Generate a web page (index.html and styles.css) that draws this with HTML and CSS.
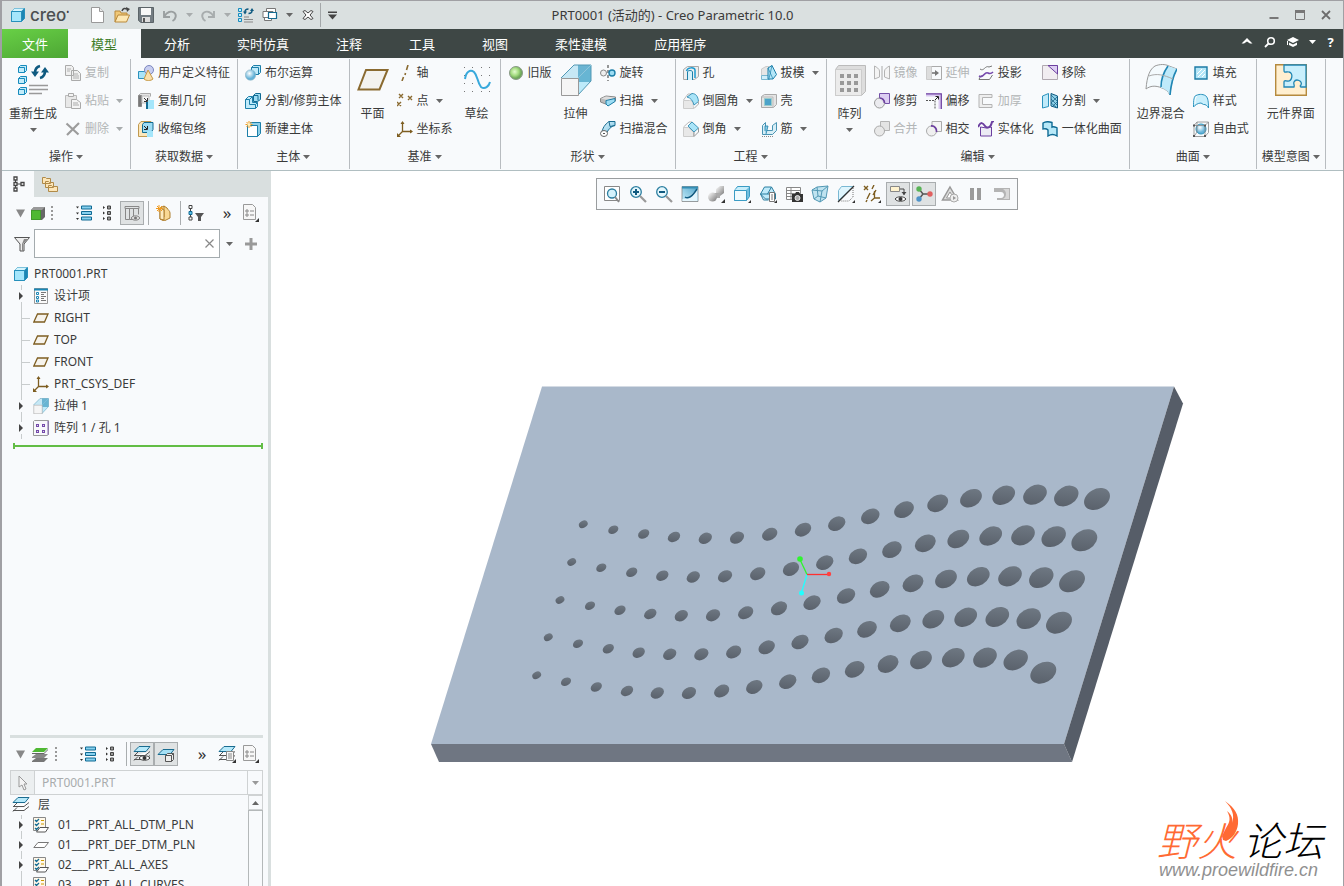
FILE: index.html
```html
<!DOCTYPE html>
<html lang="zh-CN">
<head>
<meta charset="utf-8">
<title>PRT0001 - Creo Parametric 10.0</title>
<link rel="stylesheet" href="styles.css">
</head>
<body>
<svg class="defs" aria-hidden="true">
<defs>
<linearGradient id="gb" x1="0" y1="0" x2="1" y2="1"><stop offset="0" stop-color="#e4f6fd"/><stop offset="1" stop-color="#6fbfe0"/></linearGradient>
<linearGradient id="gd" x1="1" y1="0" x2="0" y2="1"><stop offset="0" stop-color="#4fa3c8"/><stop offset="1" stop-color="#c8effc"/></linearGradient>
<linearGradient id="gs" x1="0" y1="0" x2="1" y2="1"><stop offset="0" stop-color="#ffffff"/><stop offset="1" stop-color="#777777"/></linearGradient>
<linearGradient id="gh" x1="0" y1="1" x2="1" y2="0"><stop offset="0" stop-color="#565d67"/><stop offset="1" stop-color="#727c87"/></linearGradient>
<radialGradient id="gg" cx=".4" cy=".4"><stop offset="0" stop-color="#e4fbd0"/><stop offset=".6" stop-color="#a4dc80"/><stop offset="1" stop-color="#6fa85a"/></radialGradient>
<radialGradient id="gball" cx=".4" cy=".35"><stop offset="0" stop-color="#ffffff"/><stop offset="1" stop-color="#64b2d8"/></radialGradient>
</defs>
<symbol id="down" viewBox="0 0 7 4"><path d="M0 0h7L3.500 4z" fill="currentColor"/></symbol>
<symbol id="right" viewBox="0 0 4 8"><path d="M0 0l4 4-4 4z" fill="currentColor"/></symbol>
<symbol id="part" viewBox="0 0 16 16"><path d="M1.500 4.500l3-3h10v10l-3 3h-10z" fill="#1d86b4" stroke="#2690bb"/><path d="M1.500 4.500h10v10h-10z" fill="#a5e6fb" stroke="#2690bb"/><path d="M2 4l2.500-2.500h9.500L11.500 4z" fill="#d4f4fd"/></symbol>
<symbol id="new" viewBox="0 0 16 16"><path d="M1.500.5h8l4 4v11h-12z" fill="#fff" stroke="#999"/><path d="M9.500.5v4h4" fill="#e8e8e8" stroke="#999"/></symbol>
<symbol id="open" viewBox="0 0 16 16"><path d="M1 15V4h5l1 2h6v3" fill="#f0c878" stroke="#b8883a"/><path d="M1 15l3-7h11.500l-3 7z" fill="#fde7b2" stroke="#b8883a"/><path d="M8 4c1-3 3-3 5-2" fill="none" stroke="#444" stroke-width="1.500"/><path d="M12 0l4 2-3 3z" fill="#444"/></symbol>
<symbol id="save" viewBox="0 0 16 16"><path d="M.5.5h15v15H3l-2.500-2z" fill="#737c82" stroke="#5c6468"/><path d="M3 1h10v7H3z" fill="#f8f8f8"/><path d="M4 10h8v5H4z" fill="#ddd"/><path d="M5 11h2v4H5z" fill="#555"/></symbol>
<symbol id="undo" viewBox="0 0 16 16"><path d="M2 4v6h6M2.500 9C5 5 9 3.500 12 5.500S14 12 10.500 14" fill="none" stroke="#9a9fa0" stroke-width="1.900"/></symbol>
<symbol id="redo" viewBox="0 0 16 16"><path d="M14 4v6H8M13.500 9C11 5 7 3.500 4 5.500S2 12 5.500 14" fill="none" stroke="#a8adae" stroke-width="1.900"/></symbol>
<symbol id="regen" viewBox="0 0 16 16"><g fill="#c3ecfa" stroke="#168bbd"><path d="M.5 1.500h3v3h-3zM.5 6.500h3v3h-3zM.5 11.500h3v3h-3z"/></g><path d="M6 12.500h9M6 15h9M6 10h5" stroke="#888"/><path d="M7 5c0-2 1.500-3 3.500-3M14 3.500c0 2-1.500 3-3.500 3" fill="none" stroke="#0f5a80" stroke-width="1.500"/><path d="M5 4.500h4L7 7.500zM12 4h4l-2-3z" fill="#0f5a80"/></symbol>
<symbol id="wins" viewBox="0 0 16 16"><path d="M2.500 9.500h7v4h-7zM4.500 1.500h9v5h-9z" fill="#fff" stroke="#777"/><path d="M1 4.500h10v6H1z" fill="#fff" stroke="#777"/><path d="M6.500 5.500h8v6h-8z" fill="#fff" stroke="#176b90" stroke-width="1.200"/></symbol>
<symbol id="cls" viewBox="0 0 16 16"><path d="M3 4.500l2-1 3 2.500 3-2.500 2 1L10 8l3 3.500-2 1L8 10l-3 2.500-2-1L6 8z" fill="#fff" stroke="#444"/></symbol>
<symbol id="copy" viewBox="0 0 16 16"><path d="M.5.5h6l2 2v8h-8zM6.500 5.500h6l3 3v7h-9z" fill="#f0f0f0" stroke="#aaa"/><path d="M2 4h4M2 6h3M8 9h5M8 11h6M8 13h6" stroke="#b0b0b0"/></symbol>
<symbol id="paste" viewBox="0 0 16 16"><path d="M.5 2.500h11v12H.5z" fill="#e8e8e8" stroke="#bbb"/><path d="M3.500.5h5v3h-5zM6.500 6.500h5l4 3v6h-9z" fill="#f4f4f4" stroke="#aaa"/><path d="M8 10h5M8 12h6" stroke="#aaa"/></symbol>
<symbol id="del" viewBox="0 0 16 16"><path d="M1.500 2.500l12 11M14 2L2 14" stroke="#9c9c9c" stroke-width="2.200"/></symbol>
<symbol id="udf" viewBox="0 0 16 16"><path d="M.5 6.500h9v7h-9z" fill="#a9e4f8" stroke="#2b92bd"/><circle cx="11" cy="5" r="4.500" fill="#c8cef0" stroke="#7a85bd"/><path d="M10 5l5 9c-2 2-7 2-9 0z" fill="#f9dfaa" stroke="#c69a48"/></symbol>
<symbol id="cgeo" viewBox="0 0 16 16"><path d="M.5 2.500l2-2h10v3" fill="#e4e4e4" stroke="#aaa"/><path d="M.5 2.500h3v11h-3z" fill="#777" stroke="#888"/><path d="M4 3h7v7H4z" fill="#f4f4f4" stroke="#bbb"/><path d="M6 5l3 3M9.500 5v3.500H6" stroke="#333" fill="none"/><path d="M8 9h3v7H8z" fill="#126b93"/><path d="M10 7h6v9h-6z" fill="#a5e6fb"/></symbol>
<symbol id="shrink" viewBox="0 0 16 16"><path d="M.5 3.500L3 .5h10v11l-2 4H.5z" fill="#fce7bb" stroke="#c09a50"/><path d="M4.500 3.500L6 1.500h9v7l-2 3H4.500z" fill="#9ddcf3" stroke="#126b93"/><path d="M6 5l3 3M9.500 5v3.500H6" stroke="#222" fill="none"/><path d="M9 10h6v6H9z" fill="#a5e6fb"/></symbol>
<symbol id="bool" viewBox="0 0 16 16"><path d="M6.500 2.500l2-2h7v7l-2 2h-7z" fill="#bfeafa" stroke="#1d7fa9"/><path d="M6.500 2.500h7v7" fill="none" stroke="#1d7fa9"/><circle cx="5.500" cy="10" r="5.200" fill="url(#gball)" stroke="#8fb4c4" stroke-width=".6"/></symbol>
<symbol id="splitb" viewBox="0 0 16 16"><path d="M.5 6.500l3-3h4v6h5v4l-2 2H.5z" fill="#bfeafa" stroke="#1d7fa9"/><path d="M.5 6.500h4v5h6v4M4.500 6.500l3-3M10.500 11.500l2-2" fill="none" stroke="#1d7fa9"/><path d="M8.500 2.500l2-2h5v6l-3 2h-4z" fill="#9ddcf3" stroke="#126b93"/><path d="M8.500 2.500h4.500v5" fill="none" stroke="#126b93"/></symbol>
<symbol id="newb" viewBox="0 0 16 16"><path d="M2.500 4.500l3-3h10v11l-3 3h-10z" fill="#8fd0e8" stroke="#1d7fa9"/><path d="M2.500 4.500h10v11h-10z" fill="#fff" stroke="#1d7fa9"/><path d="M4 0v7M.5 3.500h7M1.500 1l5 5M6.500 1l-5 5" stroke="#f29a1e"/><circle cx="4" cy="3.500" r="1.500" fill="#fff3c0"/></symbol>
<symbol id="axis" viewBox="0 0 16 16"><path d="M11 0L9.500 5M8.500 8L8 10M6.500 12L5 16" stroke="#8a6a30" stroke-width="1.600"/></symbol>
<symbol id="pts" viewBox="0 0 16 16"><path d="M2 1l4 4M6 1L2 5M11 3l4 4M15 3l-4 4M0 9l4 4M4 9l-4 4" stroke="#8a6a30" stroke-width="1.400"/></symbol>
<symbol id="csys" viewBox="0 0 16 16"><path d="M5.500 1v9.500H15M5.500 10.500L1 15" fill="none" stroke="#7d5d20" stroke-width="1.300"/><path d="M3.500 3L5.500 0l2 3zM13 8.500l3 2-3 2zM0 12v4h4z" fill="#7d5d20"/></symbol>
<symbol id="old" viewBox="0 0 16 16"><circle cx="8" cy="8" r="6.500" fill="url(#gg)" stroke="#8a9a88"/></symbol>
<symbol id="revolve" viewBox="0 0 16 16"><path d="M8 0v16" stroke="#333" stroke-dasharray="3 2"/><circle cx="3.500" cy="8" r="3" fill="#eee" stroke="#888"/><circle cx="12" cy="8" r="3" fill="#9ddcf3" stroke="#1d7fa9" stroke-width="1.400"/></symbol>
<symbol id="sweep" viewBox="0 0 16 16"><path d="M.5 5.500L6 3l9.500 1v4L8 12 .5 9z" fill="#bbb" stroke="#888"/><path d="M1 5.500L6 3.500l9 1L9 7.500z" fill="#ddd"/><path d="M6 7.500l9-2v3L8 13l-2-2z" fill="#9ddcf3" stroke="#1d7fa9"/></symbol>
<symbol id="sweepb" viewBox="0 0 16 16"><path d="M2 11C3 5 7 2 9 .5h6v4C11 5 8 9 6 13z" fill="url(#gb)" stroke="#1a6c90"/><path d="M9 .5l1 5 5-1" fill="none" stroke="#1a6c90"/><ellipse cx="4" cy="12.500" rx="3.500" ry="3" fill="#fff" stroke="#666"/><path d="M3 12.500h2" stroke="#555"/></symbol>
<symbol id="hole" viewBox="0 0 16 16"><path d="M.5 4.500l4-3h11v10l-4 3H.5z" fill="#eee" stroke="#aaa"/><path d="M4.500 15V7c0-2 5-2 5 0v8" fill="#d5f2fc" stroke="#1d7fa9"/><path d="M3.500 6c1-4 8-4 8.500-1v8" fill="none" stroke="#1d9ad0" stroke-width="1.500"/></symbol>
<symbol id="round" viewBox="0 0 16 16"><path d="M.5 7.500h6c3 0 4 3 4 8H.5z" fill="#e8e8e8" stroke="#ccc"/><path d="M.5 7L5 1h5" stroke="#bbb" fill="none"/><path d="M4 4l5-3.500c4 0 6 3 6.500 8L11 12C10 8 8 5 4 4z" fill="#a9e4f8" stroke="#1d7fa9" stroke-width=".8"/><path d="M15.500 8v3L11 15.500" fill="none" stroke="#aaa"/></symbol>
<symbol id="chamfer" viewBox="0 0 16 16"><path d="M.5 6.500h5l5 5v4H.5z" fill="#e8e8e8" stroke="#ccc"/><path d="M.5 6L6 1h3" stroke="#bbb" fill="none"/><path d="M5 5l4-4 6.500 6L11 11z" fill="#a9e4f8" stroke="#1d7fa9" stroke-width=".8"/><path d="M15.500 7v4L11 15.500V11" fill="none" stroke="#999"/></symbol>
<symbol id="draft" viewBox="0 0 16 16"><path d="M.5 10.500V4L5 1.500h3v9" fill="#e6e6e6" stroke="#ccc"/><path d="M.5 10.500h8v4h-8z" fill="#d0eefa" stroke="#7ab6cf"/><path d="M7 3l4-2.500 4.500 9L12 14H7z" fill="#b4e6f8" stroke="#1d7fa9"/><path d="M11 .5l-3 13M7 3l5 11" stroke="#1d7fa9" fill="none" stroke-width=".7"/></symbol>
<symbol id="shell" viewBox="0 0 16 16"><path d="M.5 3.500l3-2h12v10l-3 3H.5z" fill="#e4e4e4" stroke="#aaa"/><path d="M1 4h11v10.500" fill="none" stroke="#bbb"/><path d="M3.500 5.500h7v7h-7z" fill="#4da3c9" stroke="#9cc"/></symbol>
<symbol id="rib" viewBox="0 0 16 16"><path d="M1.500 13.500v-9l3-3v8h7v-5l4-3v8l-4 4z" fill="#d8eef6" stroke="#4a94b3"/><path d="M4 10V5h3l-2 8" fill="#8ecfe8" stroke="#1d7fa9" stroke-width=".8"/><path d="M1 15.500h12" stroke="#888" stroke-dasharray="1 1"/></symbol>
<symbol id="mirror" viewBox="0 0 16 16"><path d="M8 1v14" stroke="#aaa"/><path d="M.5 1v13l5-2V6c0-2-3-4-5-5zM15.500 1v13l-5-2V6c0-2 3-4 5-5z" fill="#f4f4f4" stroke="#b4b4b4"/></symbol>
<symbol id="extend" viewBox="0 0 16 16"><path d="M.5 1.500h5v13h-5z" fill="#ddd" stroke="#ccc"/><path d="M5.500 1.500h10v13h-10" fill="none" stroke="#aaa"/><path d="M6 8h5" stroke="#777" stroke-width="1.600"/><path d="M9 5l4 3-4 3z" fill="#777"/></symbol>
<symbol id="project" viewBox="0 0 16 16"><path d="M2 4c4 3 5-4 9-2l3-1M1 14.500c1-3 2-4 4-4M14.500 10l-3 4.500H1" fill="none" stroke="#777"/><path d="M1 11c5 3 5-5 9-3 2 1 3 1 5-1" fill="none" stroke="#7548ad" stroke-width="1.600"/></symbol>
<symbol id="remove" viewBox="0 0 16 16"><path d="M.5.5h15v14H.5z" fill="#f1edf1" stroke="#b0a8b0"/><path d="M6 .5h9.500V9z" fill="#dccdf2" stroke="#6c3fa0"/></symbol>
<symbol id="trim" viewBox="0 0 16 16"><path d="M5.500.5h10v10h-5L5.500 5z" fill="#dccdf2" stroke="#7450a8"/><circle cx="5.500" cy="10" r="5" fill="#e9e9ed" fill-opacity=".9" stroke="#999"/><path d="M5.500 5a5 5 0 0 1 5 5" fill="none" stroke="#6c3fa0" stroke-width="1.700"/></symbol>
<symbol id="offset" viewBox="0 0 16 16"><path d="M0 2h14v14" fill="none" stroke="#d9c8f0" stroke-width="3"/><path d="M0 .8h15.300V16" fill="none" stroke="#6c3fa0" stroke-width="1.200"/><path d="M0 7.500h9V16" fill="none" stroke="#555" stroke-dasharray="2 1"/><path d="M9 7l3-3M9.500 3.500h3v3" stroke="#222" fill="none"/></symbol>
<symbol id="thick" viewBox="0 0 16 16"><path d="M1 1.500h13v3H4.500v7H14v3H1z" fill="#eee" stroke="#b4b4b4"/></symbol>
<symbol id="split" viewBox="0 0 16 16"><path d="M.5 3l6-2.500v13L.5 15z" fill="#bfeafa" stroke="#2b92bd"/><path d="M9 .5l6.500 2.500v12L9 13z" fill="#8fd0e8" stroke="#0f5a80"/><path d="M9 2l6 6M9 6l6 6M9 10l5 4M15 4l-6 6M15 9l-5 5" stroke="#0f5a80" stroke-width=".7"/></symbol>
<symbol id="merge" viewBox="0 0 16 16"><path d="M6.500.5h9v9h-9z" fill="#e4e4e4" stroke="#b4b4b4"/><circle cx="5.500" cy="10" r="5" fill="#e8e8e8" stroke="#aaa"/></symbol>
<symbol id="inter" viewBox="0 0 16 16"><path d="M6 5.500v-5h9.500v10H11" fill="#f4f4f4" stroke="#aaa"/><circle cx="5.500" cy="10" r="5" fill="#f0f0f0" stroke="#aaa"/><path d="M5 5a5 5 0 0 1 5.500 6" fill="none" stroke="#6c3fa0" stroke-width="1.800"/></symbol>
<symbol id="solid" viewBox="0 0 16 16"><path d="M2.500 6v9h11V6l-5 1z" fill="#ecebf4" stroke="#6c3fa0"/><path d="M0 6C3 0 5 2 7 5c2 3 5 1 6-1l1-3 2-1" fill="none" stroke="#6c3fa0" stroke-width="2"/></symbol>
<symbol id="unify" viewBox="0 0 16 16"><path d="M1 2c3-2 6-1.500 9-.5V6c2-1 3 0 5 1v8c-3-2-6-2-9 0V9C4 7 2 8 1 8z" fill="#b7e8f8" stroke="#0f6a94" stroke-width="1.400"/></symbol>
<symbol id="fill" viewBox="0 0 16 16"><path d="M2 2h12v12H2z" fill="#b4e6f8" stroke="#1c7ba5" stroke-width="1.400"/><path d="M4 9l5-5M5 12l7-7M9 12l3-3" stroke="#fff"/></symbol>
<symbol id="style" viewBox="0 0 16 16"><path d="M.5 14C.5 7 1 3 3 2.500c4-2 8-1 10 .5 2 2 2.500 6 2.500 12-1-2-3-4-5-3.500L8 10c-3 0-6 2-7.500 4z" fill="#c8effc" stroke="#2b92bd"/><path d="M4 3c-2 2-2 5-2 8" stroke="#fff" fill="none"/></symbol>
<symbol id="free" viewBox="0 0 16 16"><circle cx="8" cy="8" r="5" fill="url(#gball)" stroke="#2b92bd"/><path d="M1 4.500h11v11H1zM4 1h11.500v10.500M1 4.500L4 1M12 4.500L15.500 1M12 15.500l3.500-4M4 1v10M4 11l-3 4.500" fill="none" stroke="#888" stroke-width=".8"/><path d="M0 3.500h2v2H0zM11 3.500h2v2h-2zM0 14h2v2H0zM11 14h2v2h-2z" fill="#555"/></symbol>
<symbol id="bregen" viewBox="0 0 32 32"><g fill="#c3ecfa" stroke="#168bbd"><path d="M1.500 3.500l2-2h6v5l-2 2h-6zM1.500 14.500l2-2h6v5l-2 2h-6zM1.500 25.500l2-2h6v5l-2 2h-6z"/><path d="M1.500 3.500h6v5M1.500 14.500h6v5M1.500 25.500h6v5" fill="none"/></g><path d="M12 21.500h19M12 25.500h19M12 29.500h13" stroke="#999" stroke-width="1.500"/><path d="M18 9c0-4 1-6 5-7M28 7c0 4-1 6-5 7" fill="none" stroke="#0f5a80" stroke-width="2.600"/><path d="M14 7.500h8L18 13zM24 8.500h8L28 3z" fill="#0f5a80"/></symbol>
<symbol id="bplane" viewBox="0 0 32 32"><path d="M9 6h21.500l-8 19.500H1.500z" fill="#f3f2ef" stroke="#8a6a30" stroke-width="2"/></symbol>
<symbol id="bsketch" viewBox="0 0 32 32"><g fill="#777"><path d="M3 3h1v1H3zM11 3h1v1h-1zM20 3h1v1h-1zM28 3h1v1h-1zM3 11h1v1H3zM20 11h1v1h-1zM28 11h1v1h-1zM3 19h1v1H3zM11 19h1v1h-1zM28 19h1v1h-1zM3 27h1v1H3zM11 27h1v1h-1zM20 27h1v1h-1zM28 27h1v1h-1z"/></g><path d="M4 15C5 8 9 5 13 8c4 4 3 10 7 15 4 3 8-1 9-5" fill="none" stroke="#38a9dc" stroke-width="2"/></symbol>
<symbol id="bextrude" viewBox="0 0 32 32"><path d="M1 14L14 1h17L18 14z" fill="#c7e8f5"/><path d="M18 14L31 1v16L18 31z" fill="#bdeafa"/><path d="M18 1h13v17H18z" fill="#4ba3c5" opacity=".75"/><path d="M1 14L14 1h17v16L18 31" fill="none" stroke="#5298b4"/><path d="M18 14L31 1M18 31V14" fill="none" stroke="#8fc6dc"/><path d="M1.500 14.500h17v17h-17z" fill="#f5f5f5" stroke="#999"/></symbol>
<symbol id="bpattern" viewBox="0 0 32 32"><path d="M1.500 5.500l3-4h27v26l-4 4h-26z" fill="#ddd" stroke="#bbb"/><path d="M1.500 5.500h26v26h-26z" fill="#ebebeb" stroke="#ccc"/><g fill="#999"><path d="M6 10h4v4H6zM13 10h4v4h-4zM20 10h4v4h-4zM6 17h4v4H6zM13 17h4v4h-4zM20 17h4v4h-4zM6 24h4v4H6zM13 24h4v4h-4zM20 24h4v4h-4z"/></g></symbol>
<symbol id="bblend" viewBox="0 0 32 32"><path d="M1 25C2 12 5 5 10 2c5-2 10-2 14 0l8 3C29 10 26 19 25 31c-2-4-5-6-8-7C10 21 5 22 1 25z" fill="#f4fafd" stroke="#999"/><path d="M23 2l9 3c-4 7-6 15-7 26-3-5-6-7-9-7 1-9 2-16 7-22z" fill="#bfeafa"/><path d="M23 2c-5 7-7 14-7 21M25 31c1-11 3-19 7-26" fill="none" stroke="#2187b5" stroke-width="1.600"/><path d="M4 12c8-3 15-1 24 3" fill="none" stroke="#aaa"/></symbol>
<symbol id="bmodel" viewBox="0 0 32 32"><path d="M.7.700h30.600v30.600H.7z" fill="#ffefd0" stroke="#b58a3e" stroke-width="1.400"/><path d="M9 1h22v22h-5c-1 0-1-2 0-2 2-4-5-7-7-3-1 2 1 3 0 5h-10v-5c0-2 2-1 3-1 5 1 7-8 2-9-3-1-5 2-5-2z" fill="#c9effc" stroke="#2187b5" stroke-width="1.300"/></symbol>
<symbol id="plane" viewBox="0 0 16 16"><path d="M4.500 4h10.500l-3.500 8H.8z" fill="#f6f3ec" stroke="#7d5d20" stroke-width="1.300"/></symbol>
<symbol id="lplane" viewBox="0 0 16 16"><path d="M5 5.500h10.500l-4 5H.8z" fill="#fff" stroke="#777"/></symbol>
<symbol id="items" viewBox="0 0 16 16"><path d="M1.500.5h13v15h-13z" fill="#fafafa" stroke="#999"/><path d="M1 1.500h14" stroke="#1a86b5" stroke-width="2"/><path d="M3.500 4.500h2v2h-2zM3.500 8.500h2v2h-2zM3.500 12h2v2h-2z" fill="#fff" stroke="#1a86b5"/><path d="M8 4.500h5M8 6.500h3M8 8.500h5M8 10.500h3M8 12.500h5" stroke="#777"/></symbol>
<symbol id="pattern" viewBox="0 0 16 16"><path d="M.5 1.500l1-1h14v14l-1 1H.5z" fill="#f8f8fb" stroke="#999"/><path d="M15 1v14" stroke="#8060b0"/><path d="M3 4h3v3H3zM9 4h3v3H9zM3 10h3v3H3zM9 10h3v3H9z" fill="#7548ad"/><path d="M4 5h1v1H4zM10 5h1v1h-1zM4 11h1v1H4zM10 11h1v1h-1z" fill="#ddd"/></symbol>
<symbol id="tree" viewBox="0 0 16 16"><path d="M5.500 2v12M5.500 8h7" stroke="#444"/><path d="M4 1h3v3H4zM4 6.500h3v3H4zM4 12h3v3H4zM11 6.500h3v3h-3z" fill="#fff" stroke="#444" stroke-width="1.300"/></symbol>
<symbol id="folders" viewBox="0 0 16 16"><g fill="#fde6b8" stroke="#b08a48"><path d="M.5 1.500h3l1 1h4v5h-8zM3.500 5.500h3l1 1h4v5h-8zM6.500 9.500h3l1 1h5v5h-9z"/></g></symbol>
<symbol id="green" viewBox="0 0 16 16"><path d="M1 5l3-3h11v10l-3 3H1z" fill="#666"/><path d="M1 5l3-3h11l-3 3z" fill="#999"/><path d="M1.500 5.500h9v9h-9z" fill="#4fb833" stroke="#409a2b"/></symbol>
<symbol id="dots" viewBox="0 0 4 16"><path d="M1 1h2v2H1zM1 5h2v2H1zM1 9h2v2H1zM1 13h2v2H1z" fill="#999"/></symbol>
<symbol id="expand" viewBox="0 0 16 16"><path d="M0 1.500h3l-1.500 2zM0 7.500h3l-1.500 2zM0 13h3l-1.500 2z" fill="#333"/><path d="M5.500 1h10v3h-10zM5.500 6.500h10v3h-10zM5.500 12h10v3h-10z" fill="#86d0ee" stroke="#0f6a94"/></symbol>
<symbol id="collapse" viewBox="0 0 16 16"><path d="M3 1l2 1.500L3 4zM3 6.500L5 8 3 9.500zM3 12l2 1.500L3 15z" fill="#333"/><path d="M7.500 1h3v3h-3zM7.500 6.500h3v3h-3zM7.500 12h3v3h-3z" fill="#999" stroke="#444"/></symbol>
<symbol id="cols" viewBox="0 0 16 16"><path d="M1 1.500h14v2H1zM1.500 3.500v11h4v-11M5.500 14.500h4v-11M14.500 3.500v6" fill="none" stroke="#888"/><path d="M7 13c2-3 7-3 9 0-2 3-7 3-9 0z" fill="#ddd" stroke="#888"/><circle cx="11.500" cy="13" r="1.500" fill="#777"/></symbol>
<symbol id="pbox" viewBox="0 0 16 16"><path d="M4 3l4-2v11l-4 2zM8 1l3 2c1 2 3 3 3 5v5l-6 3-4-2" fill="#f9d894" stroke="#ad7e2e"/><path d="M4 3v11l4 1V5z" fill="#fdeabf" stroke="#ad7e2e"/><path d="M3 0v7M0 3.500h7M1 1l5 5M6 1L1 6" stroke="#f29a1e"/></symbol>
<symbol id="tfilter" viewBox="0 0 16 16"><path d="M2.500 1v14" stroke="#444"/><path d="M1 .5h3v3H1zM1 12h3v3H1z" fill="#fff" stroke="#444"/><path d="M1 6.500h3v3H1z" fill="#5cc3ea" stroke="#0f6a94"/><path d="M7 8h9l-3 4v4h-3v-4z" fill="#555"/></symbol>
<symbol id="doc" viewBox="0 0 18 18"><path d="M1.500.5h9l3 3v12h-12z" fill="#f7f7f7" stroke="#999"/><path d="M4 6h2v2H4zM4 10h2v2H4z" fill="#fff" stroke="#888"/><path d="M8 7h4M8 11h4" stroke="#888"/><path d="M17 14v4h-4z" fill="#333"/></symbol>
<symbol id="funnel" viewBox="0 0 16 16"><path d="M.5 1.500h15L10 8v7H6V8z" fill="#eee" stroke="#555"/><path d="M10 3h4L9 8v7H8V8z" fill="#888"/></symbol>
<symbol id="gstack" viewBox="0 0 18 18"><path d="M1 16l4-3h12l-4 4H1z" fill="#777"/><path d="M1 12l4-3h12l-4 4H1z" fill="#888"/><path d="M1 7l4-4h12l-4 4H1z" fill="#4fb833"/><path d="M1 8h12l4-4v1l-4 4H1z" fill="#666"/></symbol>
<symbol id="layers" viewBox="0 0 18 18"><path d="M1 14.500h11l5-4M1 15.500l4-4M1 10.500h11l5-4M1 11l4-4" fill="#fff" stroke="#555"/><path d="M1 6.500l5-5h11l-4 5z" fill="#b6e9fa" stroke="#1a6c90"/></symbol>
<symbol id="leye" viewBox="0 0 18 18"><use href="#layers"/><path d="M6 13c2-3 9-3 11 0-2 3-9 3-11 0z" fill="#fff" stroke="#444"/><circle cx="11.500" cy="13" r="2" fill="#333"/></symbol>
<symbol id="lbox" viewBox="0 0 18 18"><path d="M1 9.500l5-5h11l-4 5z" fill="#a5e0f5" stroke="#1a6c90"/><path d="M8.500 10.500l2-2h6v6l-2 2h-6zM8.500 10.500h6v6M14.500 10.500l2-2" fill="#eee" stroke="#555"/></symbol>
<symbol id="ldoc" viewBox="0 0 18 18"><use href="#layers"/><path d="M8.500 6.500h7v9h-7z" fill="#f7f7f7" stroke="#888"/><path d="M10 9h4M10 11h4M10 13h4" stroke="#888"/><path d="M18 14v4h-4z" fill="#333"/></symbol>
<symbol id="cursor" viewBox="0 0 16 16"><path d="M4 1v11l3-2 2 5 2-1-2-5h3z" fill="#f4f4f4" stroke="#999"/></symbol>
<symbol id="rule" viewBox="0 0 16 16"><path d="M.5.5h12v13H.5z" fill="#fff8ea" stroke="#888"/><path d="M2 3l1.500 1.500L6 2M2 7l1.500 1.500L6 6M2 11l1.500 1.500L6 10" fill="none" stroke="#126b93" stroke-width="1.300"/><path d="M8 3.500h3M8 7h3" stroke="#c90"/><path d="M7 10.500h8.500l-3 4.500H3.500z" fill="#fff" stroke="#555"/></symbol>
<symbol id="zfit" viewBox="0 0 18 18"><path d="M1.500 1.500h15v14h-15z" fill="#fff" stroke="#888"/><circle cx="9" cy="8.500" r="4.500" fill="#d4f2fc" stroke="#2b7ea0" stroke-width="1.300"/><path d="M12 12l4 5" stroke="#888" stroke-width="2"/></symbol>
<symbol id="zin" viewBox="0 0 18 18"><circle cx="7" cy="7" r="5.300" fill="#e4f7fd" stroke="#2b7ea0" stroke-width="1.300"/><path d="M11 11l6 6" stroke="#999" stroke-width="2.200"/><path d="M4 7h6M7 4v6" stroke="#0f5a80" stroke-width="2"/></symbol>
<symbol id="zout" viewBox="0 0 18 18"><circle cx="7" cy="7" r="5.300" fill="#e4f7fd" stroke="#2b7ea0" stroke-width="1.300"/><path d="M11 11l6 6" stroke="#999" stroke-width="2.200"/><path d="M4 7h6" stroke="#0f5a80" stroke-width="2"/></symbol>
<symbol id="repaint" viewBox="0 0 18 18"><path d="M1 1.500h16v15H1z" fill="url(#gd)" stroke="#888" stroke-width=".8"/><path d="M1 1.500h16v2H1z" fill="#358eb5"/><path d="M1.500 16v-2c4 0 6-1 8-4l7-6v12z" fill="#e4f6fd"/><path d="M4 12c3 2 7 0 12-8" stroke="#0f5a80" fill="none" stroke-width="1.500"/></symbol>
<symbol id="shade" viewBox="0 0 18 18"><path d="M9 4l4-3h4v7l-4 3H9z" fill="url(#gs)"/><path d="M6 8h7v5H6z" fill="#aaa"/><circle cx="5.500" cy="12" r="4.500" fill="url(#gs)"/><path d="M18 14v4h-4z" fill="#333"/></symbol>
<symbol id="vcube" viewBox="0 0 18 18"><path d="M1.500 5.500l3-4h12v10l-3 4h-12z" fill="#72bfde" stroke="#3b9cc4"/><path d="M1.500 5.500h12v10h-12z" fill="#f1fbfe" stroke="#3b9cc4"/><path d="M2 5l3-3h11l-3 3z" fill="#c7eefb"/><path d="M18 15v3h-3z" fill="#333"/></symbol>
<symbol id="view" viewBox="0 0 18 18"><path d="M1.500 9l4-7h7l4 7v5h-10z" fill="#bfeafa" stroke="#2b7ea0"/><path d="M1.500 9H16M1.500 9l3 6h5M12.500 2l-4 7" stroke="#2b7ea0" fill="none"/><path d="M10.500 7.500h5v9h-5z" fill="#fff" stroke="#777"/><path d="M12 10h2M12 12h2M12 14h2" stroke="#777"/><path d="M18 15v3h-3z" fill="#333"/></symbol>
<symbol id="vman" viewBox="0 0 18 18"><path d="M1.500 2.500h14v12h-14zM1.500 5.500h14M1.500 8.500h14M1.500 11.500h14M6 2v12" fill="#fff" stroke="#888"/><path d="M7 9h3l1-2h3l1 2h3v8H7z" fill="#333"/><circle cx="12.500" cy="13" r="2.500" fill="#aaa" stroke="#fff" stroke-width=".8"/></symbol>
<symbol id="persp" viewBox="0 0 18 18"><path d="M1 5l5-3 11-1-2 12-6 4-6-3z" fill="#bfe3f0" stroke="#5298b4"/><path d="M1 5l10 1 6-5M11 6L9 17M6 2l1 9 8 2M7 11l-4 3" fill="none" stroke="#5298b4"/></symbol>
<symbol id="dsec" viewBox="0 0 18 18"><path d="M1.500 15.500v-10l3-4h12z" fill="#dff5fd" stroke="#79b8d3"/><path d="M16 3v9l-4 4H4" fill="none" stroke="#777" stroke-dasharray="1 1"/><path d="M1 17L17 1" stroke="#333" stroke-width="1.200"/><path d="M18 15v3h-3z" fill="#333"/></symbol>
<symbol id="datum" viewBox="0 0 18 18"><path d="M1 1l4 4M5 1L1 5M11 0L9 4M7 8l-3 6M13 5l-3 5M4 15l-1 2" stroke="#7d5d20" stroke-width="1.400"/><path d="M11.500 6v7H17M11.500 13L8 16" fill="none" stroke="#7d5d20" stroke-width="1.300"/><path d="M18 15v3h-3z" fill="#333"/></symbol>
<symbol id="annot" viewBox="0 0 18 18"><path d="M1.500 1.500h9v5h-9z" fill="#fff3cf" stroke="#888"/><path d="M11 4h4v6" fill="none" stroke="#444"/><path d="M12.500 7h5l-2.500 3z" fill="#444"/><path d="M6 14c2-3 9-3 11 0-2 3-9 3-11 0z" fill="#fff" stroke="#444"/><circle cx="11.500" cy="14" r="2" fill="#333"/></symbol>
<symbol id="spin" viewBox="0 0 18 18"><path d="M4 4l4 5-4 5M8 9h7" fill="none" stroke="#555" stroke-width="1.500"/><circle cx="4" cy="4" r="2.700" fill="#58b356"/><circle cx="15" cy="9" r="2.700" fill="#e06060"/><circle cx="4" cy="14" r="2.700" fill="#4f93c8"/></symbol>
<symbol id="sim" viewBox="0 0 18 18"><path d="M9 2l7.500 13h-15z" fill="#ddd" stroke="#999" stroke-width="1.500"/><path d="M9 7l3.500 6h-7z" fill="#fff" stroke="#999"/><circle cx="13" cy="13" r="4" fill="#eee" stroke="#aaa"/><path d="M12 11l3 2-3 2z" fill="#999"/></symbol>
<symbol id="pause" viewBox="0 0 18 18"><path d="M3 3h4v12H3zM10 3h4v12h-4z" fill="#9b9b9b"/></symbol>
<symbol id="simres" viewBox="0 0 18 18"><path d="M1 3h16v12H4v-2h4c4 0 4-6 0-6H1z" fill="#b4b4b4"/><path d="M10 4h6v10h-6c4-2 4-8 0-10z" fill="#d8d8d8"/></symbol>
</svg>

<div class="window">
<header class="titlebar">
  <div class="quick">
    <span class="brand"><svg class="i16"><use href="#part"/></svg><span class="brand-name">creo</span><span class="brand-dot">•</span></span>
    <button class="qb" aria-label="新建"><svg class="i16"><use href="#new"/></svg></button>
    <button class="qb" aria-label="打开"><svg class="i16"><use href="#open"/></svg></button>
    <button class="qb" aria-label="保存"><svg class="i16"><use href="#save"/></svg></button>
    <button class="qb" aria-label="撤消"><svg class="i16"><use href="#undo"/></svg></button>
    <button class="qa off" aria-label="撤消列表"><svg class="arr"><use href="#down"/></svg></button>
    <button class="qb" aria-label="重做"><svg class="i16"><use href="#redo"/></svg></button>
    <button class="qa off" aria-label="重做列表"><svg class="arr"><use href="#down"/></svg></button>
    <button class="qb" aria-label="重新生成"><svg class="i16"><use href="#regen"/></svg></button>
    <button class="qb" aria-label="窗口"><svg class="i16"><use href="#wins"/></svg></button>
    <button class="qa" aria-label="窗口列表"><svg class="arr"><use href="#down"/></svg></button>
    <button class="qb" aria-label="关闭窗口"><svg class="i16"><use href="#cls"/></svg></button>
    <button class="qa custom" aria-label="自定义"><svg class="i9" viewBox="0 0 9 8"><path d="M0 0h9v1.500H0zM0 3h9L4.500 8z" fill="#444"/></svg></button>
  </div>
  <h1 class="title">PRT0001 (活动的) - Creo Parametric 10.0</h1>
  <div class="winctl">
    <button aria-label="最小化"><svg class="i12" viewBox="0 0 12 12"><path d="M1.500 8h9v2h-9z" fill="#777"/></svg></button>
    <button aria-label="最大化"><svg class="i12" viewBox="0 0 12 12"><path d="M1.500 2v8.500h9V2" fill="none" stroke="#777"/><path d="M1 1h10v3H1z" fill="#777"/></svg></button>
    <button aria-label="关闭"><svg class="i12" viewBox="0 0 12 12"><path d="M2 2l8 8M10 2l-8 8" stroke="#6c6c6c" stroke-width="1.800"/></svg></button>
  </div>
</header>

<nav class="tabs">
  <button class="tab file">文件</button><button class="tab active">模型</button><button class="tab">分析</button><button class="tab">实时仿真</button><button class="tab">注释</button><button class="tab">工具</button><button class="tab">视图</button><button class="tab">柔性建模</button><button class="tab">应用程序</button>
  <div class="tabtools">
    <button aria-label="最小化功能区"><svg class="i12" viewBox="0 0 12 12"><path d="M.5 7.500L6 2l5.500 5.500H9L6 5.500 3 7.500z" fill="#fff"/></svg></button>
    <button aria-label="搜索"><svg class="i12" viewBox="0 0 12 12"><circle cx="7" cy="5" r="3.300" fill="none" stroke="#fff" stroke-width="1.600"/><path d="M4.500 7.500L1 11" stroke="#fff" stroke-width="1.800"/></svg></button>
    <button aria-label="学习"><svg class="i12" viewBox="0 0 12 12"><path d="M0 4l6-3 6 3-6 3z" fill="#fff"/><path d="M2 6.500l4 2 4-2v2.500l-4 2-4-2zM0 5h1v4H0z" fill="#fff"/></svg></button>
    <button class="slim" aria-label="学习列表"><svg class="arr"><use href="#down"/></svg></button>
    <button class="help" aria-label="帮助">?</button>
  </div>
</nav>

<section class="ribbon">
  <div class="group">
    <div class="body">
      <button class="big"><svg class="i32"><use href="#bregen"/></svg><span>重新生成</span><svg class="arr"><use href="#down"/></svg></button>
      <div class="col">
        <button class="cmd off"><svg class="i16"><use href="#copy"/></svg>复制</button>
        <button class="cmd off"><svg class="i16"><use href="#paste"/></svg>粘贴<svg class="arr"><use href="#down"/></svg></button>
        <button class="cmd off"><svg class="i16"><use href="#del"/></svg>删除<svg class="arr"><use href="#down"/></svg></button>
      </div>
    </div>
    <button class="glabel">操作<svg class="arr"><use href="#down"/></svg></button>
  </div>
  <div class="group">
    <div class="body"><div class="col">
      <button class="cmd"><svg class="i16"><use href="#udf"/></svg>用户定义特征</button>
      <button class="cmd"><svg class="i16"><use href="#cgeo"/></svg>复制几何</button>
      <button class="cmd"><svg class="i16"><use href="#shrink"/></svg>收缩包络</button>
    </div></div>
    <button class="glabel">获取数据<svg class="arr"><use href="#down"/></svg></button>
  </div>
  <div class="group">
    <div class="body"><div class="col">
      <button class="cmd"><svg class="i16"><use href="#bool"/></svg>布尔运算</button>
      <button class="cmd"><svg class="i16"><use href="#splitb"/></svg>分割/修剪主体</button>
      <button class="cmd"><svg class="i16"><use href="#newb"/></svg>新建主体</button>
    </div></div>
    <button class="glabel">主体<svg class="arr"><use href="#down"/></svg></button>
  </div>
  <div class="group">
    <div class="body">
      <button class="big"><svg class="i32"><use href="#bplane"/></svg><span>平面</span></button>
      <div class="col">
        <button class="cmd"><svg class="i16"><use href="#axis"/></svg>轴</button>
        <button class="cmd"><svg class="i16"><use href="#pts"/></svg>点<svg class="arr"><use href="#down"/></svg></button>
        <button class="cmd"><svg class="i16"><use href="#csys"/></svg>坐标系</button>
      </div>
      <button class="big"><svg class="i32"><use href="#bsketch"/></svg><span>草绘</span></button>
    </div>
    <button class="glabel">基准<svg class="arr"><use href="#down"/></svg></button>
  </div>
  <div class="group">
    <div class="body">
      <div class="col"><button class="cmd"><svg class="i16"><use href="#old"/></svg>旧版</button></div>
      <button class="big"><svg class="i32"><use href="#bextrude"/></svg><span>拉伸</span></button>
      <div class="col">
        <button class="cmd"><svg class="i16"><use href="#revolve"/></svg>旋转</button>
        <button class="cmd"><svg class="i16"><use href="#sweep"/></svg>扫描<svg class="arr"><use href="#down"/></svg></button>
        <button class="cmd"><svg class="i16"><use href="#sweepb"/></svg>扫描混合</button>
      </div>
    </div>
    <button class="glabel">形状<svg class="arr"><use href="#down"/></svg></button>
  </div>
  <div class="group">
    <div class="body">
      <div class="col">
        <button class="cmd"><svg class="i16"><use href="#hole"/></svg>孔</button>
        <button class="cmd"><svg class="i16"><use href="#round"/></svg>倒圆角<svg class="arr"><use href="#down"/></svg></button>
        <button class="cmd"><svg class="i16"><use href="#chamfer"/></svg>倒角<svg class="arr"><use href="#down"/></svg></button>
      </div>
      <div class="col">
        <button class="cmd"><svg class="i16"><use href="#draft"/></svg>拔模<svg class="arr"><use href="#down"/></svg></button>
        <button class="cmd"><svg class="i16"><use href="#shell"/></svg>壳</button>
        <button class="cmd"><svg class="i16"><use href="#rib"/></svg>筋<svg class="arr"><use href="#down"/></svg></button>
      </div>
    </div>
    <button class="glabel">工程<svg class="arr"><use href="#down"/></svg></button>
  </div>
  <div class="group">
    <div class="body">
      <button class="big"><svg class="i32"><use href="#bpattern"/></svg><span>阵列</span><svg class="arr"><use href="#down"/></svg></button>
      <div class="col">
        <button class="cmd off"><svg class="i16"><use href="#mirror"/></svg>镜像</button>
        <button class="cmd"><svg class="i16"><use href="#trim"/></svg>修剪</button>
        <button class="cmd off"><svg class="i16"><use href="#merge"/></svg>合并</button>
      </div>
      <div class="col">
        <button class="cmd off"><svg class="i16"><use href="#extend"/></svg>延伸</button>
        <button class="cmd"><svg class="i16"><use href="#offset"/></svg>偏移</button>
        <button class="cmd"><svg class="i16"><use href="#inter"/></svg>相交</button>
      </div>
      <div class="col">
        <button class="cmd"><svg class="i16"><use href="#project"/></svg>投影</button>
        <button class="cmd off"><svg class="i16"><use href="#thick"/></svg>加厚</button>
        <button class="cmd"><svg class="i16"><use href="#solid"/></svg>实体化</button>
      </div>
      <div class="col">
        <button class="cmd"><svg class="i16"><use href="#remove"/></svg>移除</button>
        <button class="cmd"><svg class="i16"><use href="#split"/></svg>分割<svg class="arr"><use href="#down"/></svg></button>
        <button class="cmd"><svg class="i16"><use href="#unify"/></svg>一体化曲面</button>
      </div>
    </div>
    <button class="glabel">编辑<svg class="arr"><use href="#down"/></svg></button>
  </div>
  <div class="group">
    <div class="body">
      <button class="big"><svg class="i32"><use href="#bblend"/></svg><span>边界混合</span></button>
      <div class="col">
        <button class="cmd"><svg class="i16"><use href="#fill"/></svg>填充</button>
        <button class="cmd"><svg class="i16"><use href="#style"/></svg>样式</button>
        <button class="cmd"><svg class="i16"><use href="#free"/></svg>自由式</button>
      </div>
    </div>
    <button class="glabel">曲面<svg class="arr"><use href="#down"/></svg></button>
  </div>
  <div class="group last">
    <div class="body"><button class="big"><svg class="i32"><use href="#bmodel"/></svg><span>元件界面</span></button></div>
    <button class="glabel">模型意图<svg class="arr"><use href="#down"/></svg></button>
  </div>
</section>

<main class="work">
  <aside class="side">
    <div class="sidetabs">
      <button class="stab on" aria-label="模型树"><svg class="i16"><use href="#tree"/></svg></button>
      <button class="stab" aria-label="文件夹浏览器"><svg class="i16"><use href="#folders"/></svg></button>
    </div>
    <div class="panel">
      <div class="bar">
        <button class="tri" aria-label="折叠"><svg class="i9" viewBox="0 0 9 8"><path d="M0 0h9L4.500 8z" fill="#888"/></svg></button>
        <button class="kind" aria-label="零件"><svg class="i16"><use href="#green"/></svg></button>
        <svg class="grip"><use href="#dots"/></svg>
        <button class="tb first" aria-label="全部展开"><svg class="i16"><use href="#expand"/></svg></button>
        <button class="tb" aria-label="全部折叠"><svg class="i16"><use href="#collapse"/></svg></button>
        <button class="tb pressed" aria-label="树列"><svg class="i16"><use href="#cols"/></svg></button>
        <i class="sep"></i>
        <button class="tb" aria-label="新建零件"><svg class="i16"><use href="#pbox"/></svg></button>
        <i class="sep"></i>
        <button class="tb" aria-label="树过滤器"><svg class="i16"><use href="#tfilter"/></svg></button>
        <button class="tb more">»</button>
        <button class="tb" aria-label="设置"><svg class="i18"><use href="#doc"/></svg></button>
      </div>
      <div class="search">
        <svg class="i16"><use href="#funnel"/></svg>
        <div class="field"><input type="text" aria-label="过滤"><button aria-label="清除"><svg class="i9" viewBox="0 0 9 9"><path d="M.5.500l8 8M8.500.500l-8 8" stroke="#888" stroke-width="1.200"/></svg></button></div>
        <button class="drop" aria-label="过滤列表"><svg class="arr"><use href="#down"/></svg></button>
        <button class="plus" aria-label="添加"><svg class="i12" viewBox="0 0 12 12"><path d="M4.500 0h3v4.500H12v3H7.500V12h-3V7.500H0v-3h4.500z" fill="#999"/></svg></button>
      </div>
      <div class="tree">
        <div class="root"><svg class="i16"><use href="#part"/></svg>PRT0001.PRT</div>
        <ul>
          <li><button class="exp" aria-label="展开"><svg class="rt"><use href="#right"/></svg></button><svg class="i16"><use href="#items"/></svg>设计项</li>
          <li class="leaf"><svg class="i16"><use href="#plane"/></svg>RIGHT</li>
          <li class="leaf"><svg class="i16"><use href="#plane"/></svg>TOP</li>
          <li class="leaf"><svg class="i16"><use href="#plane"/></svg>FRONT</li>
          <li class="leaf"><svg class="i16"><use href="#csys"/></svg>PRT_CSYS_DEF</li>
          <li><button class="exp" aria-label="展开"><svg class="rt"><use href="#right"/></svg></button><svg class="i16" viewBox="0 0 32 32"><use href="#bextrude"/></svg>拉伸 1</li>
          <li><button class="exp" aria-label="展开"><svg class="rt"><use href="#right"/></svg></button><svg class="i16"><use href="#pattern"/></svg>阵列 1 / 孔 1</li>
        </ul>
        <div class="insert"></div>
      </div>
      <div class="layersbox">
        <div class="bar">
          <button class="tri" aria-label="折叠"><svg class="i9" viewBox="0 0 9 8"><path d="M0 0h9L4.500 8z" fill="#888"/></svg></button>
          <button class="kind wide" aria-label="层"><svg class="i18"><use href="#gstack"/></svg></button>
          <svg class="grip"><use href="#dots"/></svg>
          <button class="tb first" aria-label="全部展开"><svg class="i16"><use href="#expand"/></svg></button>
          <button class="tb narrow" aria-label="全部折叠"><svg class="i16"><use href="#collapse"/></svg></button>
          <i class="sep"></i>
          <button class="tb pressed" aria-label="显示层"><svg class="i18"><use href="#leye"/></svg></button>
          <button class="tb pressed" aria-label="层项"><svg class="i18"><use href="#lbox"/></svg></button>
          <button class="tb more">»</button>
          <button class="tb" aria-label="层列表"><svg class="i18"><use href="#ldoc"/></svg></button>
          <button class="tb" aria-label="设置"><svg class="i18"><use href="#doc"/></svg></button>
        </div>
        <div class="combo">
          <button aria-label="选择"><svg class="i16"><use href="#cursor"/></svg></button>
          <select disabled aria-label="模型"><option>PRT0001.PRT</option></select>
          <span class="cdrop"><svg class="arr"><use href="#down"/></svg></span>
        </div>
        <div class="layerlist">
          <div class="rows">
            <div class="root"><svg class="i18"><use href="#layers"/></svg>层</div>
            <ul>
              <li><button class="exp" aria-label="展开"><svg class="rt"><use href="#right"/></svg></button><svg class="i16"><use href="#rule"/></svg>01___PRT_ALL_DTM_PLN</li>
              <li><button class="exp" aria-label="展开"><svg class="rt"><use href="#right"/></svg></button><svg class="i16"><use href="#lplane"/></svg>01___PRT_DEF_DTM_PLN</li>
              <li><button class="exp" aria-label="展开"><svg class="rt"><use href="#right"/></svg></button><svg class="i16"><use href="#rule"/></svg>02___PRT_ALL_AXES</li>
              <li class="leaf"><svg class="i16"><use href="#rule"/></svg>03___PRT_ALL_CURVES</li>
            </ul>
          </div>
          <div class="scroll"><button aria-label="向上"><svg class="arr up"><use href="#down"/></svg></button><div class="thumb"></div></div>
        </div>
      </div>
    </div>
  </aside>

  <section class="canvas">
    <svg class="scene" viewBox="271 171 1072 715" role="img" aria-label="带孔阵列的板">
      <path d="M542 386.500h632L1064 744H431z" fill="#a9b8ca"/>
      <path d="M431 744h633l8 18H439z" fill="#6f7682"/>
      <path d="M1174 386.500l9 17L1072 762l-8-18z" fill="#565d68"/>
      <g id="holes" fill="url(#gh)"></g>
      <path d="M807 574.500l-7-15" stroke="#2ff52f" stroke-width="1.300"/><circle cx="800" cy="559" r="2.800" fill="#2ff52f"/>
      <path d="M807 574.500l-5.500 18" stroke="#2ff" stroke-width="1.300"/><circle cx="801.500" cy="593" r="2.500" fill="#2ff"/>
      <path d="M807 574.500h22" stroke="#ff3030" stroke-width="1.300"/><circle cx="829" cy="574" r="2.200" fill="#ff4040"/>
    </svg>
    <div class="viewbar">
      <button aria-label="重新调整"><svg class="i18"><use href="#zfit"/></svg></button>
      <button aria-label="放大"><svg class="i18"><use href="#zin"/></svg></button>
      <button aria-label="缩小"><svg class="i18"><use href="#zout"/></svg></button>
      <button aria-label="重画"><svg class="i18"><use href="#repaint"/></svg></button>
      <button aria-label="渲染"><svg class="i18"><use href="#shade"/></svg></button>
      <button aria-label="显示样式"><svg class="i18"><use href="#vcube"/></svg></button>
      <button aria-label="已保存方向"><svg class="i18"><use href="#view"/></svg></button>
      <button aria-label="视图管理器"><svg class="i18"><use href="#vman"/></svg></button>
      <button aria-label="透视图"><svg class="i18"><use href="#persp"/></svg></button>
      <button aria-label="截面"><svg class="i18"><use href="#dsec"/></svg></button>
      <button aria-label="基准显示"><svg class="i18"><use href="#datum"/></svg></button>
      <button class="pressed" aria-label="注释显示"><svg class="i18"><use href="#annot"/></svg></button>
      <button class="pressed" aria-label="旋转中心"><svg class="i18"><use href="#spin"/></svg></button>
      <button aria-label="仿真"><svg class="i18"><use href="#sim"/></svg></button>
      <button aria-label="暂停"><svg class="i18"><use href="#pause"/></svg></button>
      <button aria-label="结果"><svg class="i18"><use href="#simres"/></svg></button>
    </div>
    <div class="mark">
      <div class="mark-name"><span class="hot">野火</span><span>论坛</span></div>
      <div class="mark-url">www.proewildfire.cn</div>
      <svg class="flame" viewBox="0 0 20 42"><path d="M5 1c10 7 14 14 13 23-1 8-5 14-12 17l-3-1-1-4 4-8c4-6 5-10 1-17 5 4 6 8 5 12 3-8 0-15-7-22z" fill="#ff6a33"/></svg>
    </div>
  </section>
</main>
</div>
<script src="holes.js"></script>
</body>
</html>
```
FILE: styles.css
```css
* { box-sizing: border-box; }
body { margin: 0; font: 12px/18px "Noto Sans", "Noto Sans CJK SC", sans-serif; color: #3a3a3a; background: #fff; }
button { font: inherit; color: inherit; background: none; border: 0; padding: 0; margin: 0; display: inline-flex; align-items: center; justify-content: center; white-space: nowrap; flex: none; }
svg { display: block; flex: none; }
ul { list-style: none; margin: 0; padding: 0; }
.defs { position: absolute; width: 0; height: 0; }
.i9 { width: 9px; height: 9px; }
.i12 { width: 12px; height: 12px; }
.i16 { width: 16px; height: 16px; }
.i18 { width: 18px; height: 18px; }
.i32 { width: 32px; height: 32px; }
.arr { width: 7px; height: 4px; color: #666; }
.rt { width: 4px; height: 8px; color: #444; }
.off { color: #b2b5b6; }
.off .arr { color: #a8acad; }

.window { height: 100vh; display: flex; flex-direction: column; border: solid #a0a0a4; border-width: 1px 1px 0 2px; overflow: hidden; }

.titlebar { flex: none; height: 28px; display: grid; grid-template-columns: 1fr auto 1fr; align-items: center; background: #dae0e0; }
.quick { display: flex; align-items: center; }
.brand { display: flex; align-items: center; width: 84px; padding-left: 8px; }
.brand-name { font: 500 17px/20px Inter, sans-serif; color: #4c5052; margin-left: 4px; }
.brand-dot { font-size: 8px; line-height: 14px; align-self: flex-start; }
.qb { width: 24px; height: 24px; }
.qa { width: 14px; height: 24px; }
.custom { width: 24px; border-left: 1px solid #a4a8aa; }
.title { margin: 0; font-size: 13px; font-weight: 400; line-height: 18px; }
.winctl { display: flex; justify-content: flex-end; padding-right: 4px; }
.winctl button { width: 26px; height: 24px; }

.tabs { flex: none; display: flex; height: 29px; background: #3e4745; color: #fff; }
.tab { font-size: 13px; padding: 0 24px 0 23px; }
.tab.file { padding: 0 20px; background: linear-gradient(165deg, #68d046, #4da634); }
.tab.active { background: #f8fafc; color: #3f7d28; }
.tabtools { display: flex; align-items: center; margin-left: auto; padding-right: 2px; height: 26px; }
.tabtools button { width: 23px; height: 24px; }
.tabtools .slim { width: 16px; }
.tabtools .slim .arr { color: #fff; }
.tabtools .help { width: 21px; font-weight: 700; font-size: 13px; }

.ribbon { flex: none; display: flex; height: 113px; background: #f8fafc; border-bottom: 1px solid #b0bec1; }
.group { display: flex; flex-direction: column; flex: none; margin: 1px 0 1px; padding: 0 7px; border-right: 1px solid #b8bcc0; }
.body { flex: none; display: flex; gap: 8px; height: 84px; justify-content: center; }
.col { display: flex; flex-direction: column; }
.cmd { height: 28px; gap: 4px; justify-content: flex-start; }
.cmd .arr { margin-left: 3px; }
.big { flex-direction: column; justify-content: flex-start; min-width: 32px; padding-top: 5px; }
.big span { margin: 9px 0 5px; height: 18px; }
.glabel { flex: none; height: 26px; gap: 3px; align-self: center; padding-top: 2px; }
.last { padding: 0 5px; }

.work { flex: 1; display: flex; min-height: 0; }
.side { flex: none; width: 269px; display: flex; flex-direction: column; border-right: 3px solid #d9dfdf; background: #f8fafc; }
.sidetabs { flex: none; display: flex; height: 26px; background: #d9dfdf; }
.stab { width: 32px; }
.stab.on { background: #f8fafc; }
.panel { flex: 1; display: flex; flex-direction: column; min-height: 0; padding-right: 5px; }
.bar { flex: none; display: flex; align-items: center; height: 32px; padding-left: 10px; }
.tri { width: 16px; }
.kind { width: 20px; }
.kind.wide { width: 24px; }
.grip { width: 4px; height: 16px; margin: 0 2px; }
.tb { width: 24px; height: 24px; }
.tb.first { margin-left: 16px; }
.tb.narrow { width: 22px; }
.tb.more { margin-left: auto; font-size: 17px; color: #333; }
.pressed { background: #dfe2e3; border: 1px solid #a9adaf; }
.sep { flex: none; width: 1px; height: 24px; margin: 0 3px 0 4px; background: #a9adaf; }
.search { flex: none; display: flex; align-items: center; height: 29px; padding-left: 12px; }
.field { flex: 1; min-width: 0; display: flex; height: 29px; margin-left: 4px; border: 1px solid #a4abae; background: #fff; }
.field input { flex: 1; min-width: 0; border: 0; outline: 0; padding: 0 6px; background: none; font: inherit; }
.field button { width: 20px; }
.drop { width: 18px; }
.plus { width: 25px; }
.root { display: flex; align-items: center; }
.tree { flex: 1; min-height: 0; overflow: hidden; padding-top: 5px; }
.tree .root { height: 22px; padding-left: 11px; gap: 5px; }
.tree ul, .rows ul { padding-left: 13px; }
.tree li, .rows li { display: flex; align-items: center; height: 22px; gap: 5px; background: linear-gradient(#c8cccd, #c8cccd) 6px 0 / 1px 100% no-repeat; }
.tree .leaf, .rows .leaf { padding-left: 18px; background: linear-gradient(#c8cccd, #c8cccd) 6px 0 / 1px 100% no-repeat, linear-gradient(#c8cccd, #c8cccd) 6px 11px / 9px 1px no-repeat; }
.exp { width: 11px; height: 12px; margin-right: 2px; background: #f8fafc; }
.insert { height: 6px; margin: 4px 0 0 11px; border: solid #62bd45; border-width: 0 2px; background: linear-gradient(#62bd45, #62bd45) 0 2px / 100% 2px no-repeat; }
.layersbox { flex: none; height: 151px; display: flex; flex-direction: column; margin-left: 8px; border-top: 3px solid #d9dfdf; overflow: hidden; }
.layersbox .bar { padding-left: 2px; }
.layersbox .tb.more { width: 26px; }
.combo { flex: none; display: flex; height: 25px; border: 1px solid #cfd2d3; }
.combo button { width: 24px; background: #eceff0; border-right: 1px solid #cfd2d3; }
.combo select { flex: 1; min-width: 0; appearance: none; border: 0; background: none; padding: 0 7px; font: inherit; color: #a9acad; opacity: 1; }
.cdrop { width: 15px; display: flex; align-items: center; justify-content: center; border-left: 1px solid #cfd2d3; }
.cdrop .arr { color: #999; }
.layerlist { flex: 1; min-height: 0; display: flex; }
.rows { flex: 1; min-width: 0; }
.rows .root { height: 20px; padding-left: 2px; gap: 8px; }
.rows ul { padding-left: 5px; }
.rows li { height: 20px; gap: 5px; }
.rows li .i16 { margin-right: 4px; }
.scroll { width: 15px; display: flex; flex-direction: column; }
.scroll button { height: 15px; border: 1px solid #cfd2d3; }
.scroll .thumb { flex: 1; border: 1px solid #b4b8b9; border-bottom: 0; background: #f8fafc; }
.up { transform: rotate(180deg); }

.canvas { flex: 1; min-width: 0; position: relative; background: #fff; overflow: hidden; }
.scene { width: 100%; height: 100%; }
.viewbar { position: absolute; top: 7px; left: 50%; transform: translateX(-50%); display: flex; gap: 2px; height: 32px; padding: 3px; border: 1px solid #9a9d9f; background: #f8fafc; }
.viewbar button { width: 24px; height: 24px; }
.mark { position: absolute; right: 18px; bottom: 6px; width: 168px; }
.mark-name { display: flex; gap: 6px; font: italic 300 40px/42px "Noto Sans CJK SC", sans-serif; color: #000; }
.mark-name .hot { color: #ff6a33; }
.mark-url { padding-left: 2px; font: italic 18px/20px "Liberation Sans", sans-serif; color: #909090; }
.flame { position: absolute; left: 63px; top: -18px; width: 20px; height: 42px; }
```
FILE: holes.js
```js
// Hole centres of each pattern row, left to right.
const rows = [
  [[583.3,524.3],[613.3,529.7],[643.7,534],[674,537],[705.3,538.3],[737,537.7],[769.7,534.3],[803,529.7],[836.7,523.7],[870.3,516.3],[904,509.7],[937.7,503.3],[971,498.3],[1003.7,495.3],[1035,494.7],[1066.3,496],[1097,499]],
  [[571.7,562],[601.3,567.7],[631.7,572.3],[662.3,575.7],[693.3,577],[725,576.3],[757.7,573.7],[791,569],[824.7,562.7],[858,556.3],[892,549.7],[925.3,543.3],[958.3,539],[990.7,536],[1023,535.3],[1053.7,536.7],[1084.3,540.3]],
  [[560,600],[590,605.7],[620,610.3],[650.3,614],[681.3,615.7],[713,615.3],[745.7,612.7],[779,608.3],[812,602.7],[846,596],[879.7,589.3],[913,583.3],[946,579],[978.3,576.7],[1010,576.3],[1041.3,577.7],[1072,581.3]],
  [[548.3,637.3],[578,643.7],[608.3,648.7],[638.7,652.7],[669.7,654.3],[701.3,654.3],[733.7,652],[766.7,647.3],[800,642],[833.7,635.5],[867,629.3],[900.3,623.3],[933.3,619.3],[965.7,617.3],[997.3,617],[1028.7,618.7],[1059,622.7]],
  [[536.7,675.3],[566,681.7],[596.3,687],[627,691],[657.3,693],[689,693],[721.7,691],[754.3,687],[787.7,681.7],[821,675.3],[854.7,669.3],[888,664],[921,660],[953.3,657.7],[985,657.7],[1015.7,660],[1043.3,672.7]]
];
const radii = [4.7, 5.4, 6, 6.6, 7.1, 7.6, 8.1, 8.7, 9.2, 9.8, 10.5, 11.1, 11.6, 12.1, 12.6, 13, 13.8];
const layer = document.getElementById('holes');
for (const row of rows) {
  row.forEach(([x, y], i) => {
    const hole = document.createElementNS('http://www.w3.org/2000/svg', 'ellipse');
    hole.setAttribute('cx', x);
    hole.setAttribute('cy', y);
    hole.setAttribute('rx', radii[i]);
    hole.setAttribute('ry', radii[i] * 0.72);
    hole.setAttribute('transform', `rotate(-30 ${x} ${y})`);
    layer.appendChild(hole);
  });
}
```
